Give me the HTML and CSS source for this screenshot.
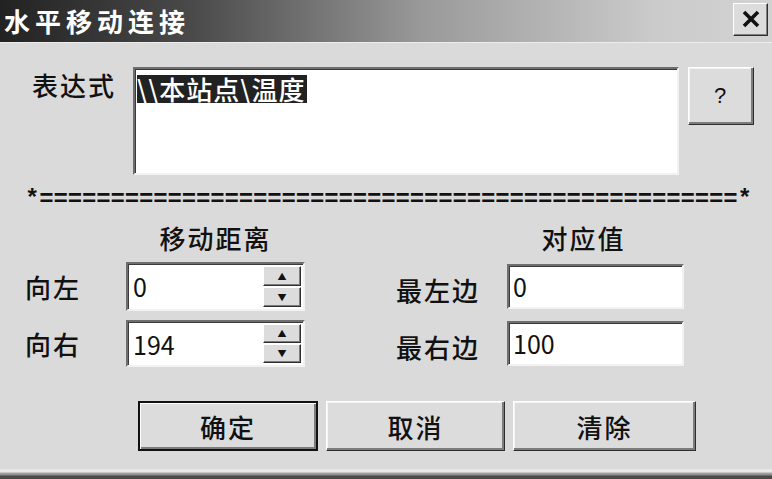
FILE: index.html
```html
<!DOCTYPE html>
<html lang="zh-CN">
<head>
    <meta charset="UTF-8">
    <title>水平移动连接</title>
    <link rel="stylesheet" href="styles.css">
</head>
<body>
    <div class="dialog">
        <div class="titlebar">
            <span class="title">水平移动连接</span>
            <div class="close-btn">
                <svg width="20" height="18" viewBox="0 0 20 18">
                    <path d="M3 2 L17 16 M17 2 L3 16" stroke="#111" stroke-width="3.6" fill="none"/>
                </svg>
            </div>
        </div>

        <div class="content">
            <div class="expr-row">
                <span class="expr-label">表达式</span>
                <div class="expr-box"><span class="selected">\\本站点\温度</span></div>
                <div class="btn help-btn">?</div>
            </div>

            <div class="separator">*=================================================*</div>

            <div class="fields">
                <div class="col-head head-move">移动距离</div>
                <div class="col-head head-value">对应值</div>

                <span class="field-label row-1">向左</span>
                <div class="spin row-1">
                    <div class="spin-text">0</div>
                    <div class="spin-btns">
                        <div class="spin-btn">&#9650;</div>
                        <div class="spin-btn">&#9660;</div>
                    </div>
                </div>
                <span class="field-label right-label row-1">最左边</span>
                <div class="edit row-1">0</div>

                <span class="field-label row-2">向右</span>
                <div class="spin row-2">
                    <div class="spin-text">194</div>
                    <div class="spin-btns">
                        <div class="spin-btn">&#9650;</div>
                        <div class="spin-btn">&#9660;</div>
                    </div>
                </div>
                <span class="field-label right-label row-2">最右边</span>
                <div class="edit row-2">100</div>
            </div>

            <div class="actions">
                <div class="btn default-btn"><span>确定</span></div>
                <div class="btn cancel-btn">取消</div>
                <div class="btn clear-btn">清除</div>
            </div>
        </div>
        <div class="frame-bottom"></div>
    </div>
</body>
</html>
```

FILE: styles.css
```css
body {
    margin: 0;
    background: #dadada;
    font-family: "Noto Sans CJK SC", "Noto Sans", sans-serif;
    font-weight: 500;
    color: #111;
}
.dialog {
    width: 772px;
    height: 479px;
    background: #dadada;
    display: flex;
    flex-direction: column;
    overflow: hidden;
}
.titlebar {
    height: 42px;
    flex: 0 0 42px;
    background: linear-gradient(to right, #222, #4a4a4a 25%, #9a9a9a 55%, #cbcbcb 85%, #d2d2d2);
    border-bottom: 1px solid #ededed;
    display: flex;
    align-items: center;
    justify-content: space-between;
}
.title {
    color: #fff;
    font-size: 26px;
    font-weight: bold;
    letter-spacing: 5px;
    line-height: 30px;
    padding-left: 4px;
}
.close-btn {
    width: 35px;
    height: 33px;
    margin-right: 4px;
    margin-top: -4px;
    background: #dcdcdc;
    box-sizing: border-box;
    border: 1px solid;
    border-color: #fff #303030 #303030 #fff;
    box-shadow: inset -1px -1px 0 #808080;
    display: flex;
    align-items: center;
    justify-content: center;
}
.content {
    flex: 1;
    padding-left: 25px;
}
.expr-row {
    display: flex;
    align-items: flex-start;
    margin-top: 24px;
}
.expr-label {
    flex: 0 0 101px;
    margin-left: 7px;
    margin-top: 3px;
    font-size: 26px;
    line-height: 30px;
    letter-spacing: 2px;
}
.expr-box {
    width: 546px;
    height: 108px;
    box-sizing: border-box;
    background: #fff;
    border: 2px solid;
    border-color: #6e6e6e #f2f2f2 #f2f2f2 #6e6e6e;
    box-shadow: inset 1px 1px 0 #3a3a3a;
    padding: 6px 0 0 2px;
}
.selected {
    display: inline-block;
    background: #222;
    color: #fff;
    font-size: 26px;
    line-height: 28px;
    letter-spacing: 1px;
    padding-right: 2px;
}
.btn {
    box-sizing: border-box;
    background: #dcdcdc;
    border: 1px solid;
    border-color: #fff #2e2e2e #2e2e2e #fff;
    box-shadow: inset -2px -2px 0 #7c7c7c, inset 1px 1px 0 #f4f4f4;
    display: flex;
    align-items: center;
    justify-content: center;
    font-size: 26px;
    letter-spacing: 2px;
}
.help-btn {
    width: 66px;
    height: 58px;
    margin-left: 9px;
    font-family: "Liberation Sans", sans-serif;
    font-size: 22px;
}
.separator {
    margin-top: 14px;
    height: 22px;
    line-height: 22px;
    font-family: "Liberation Mono", monospace;
    font-weight: bold;
    font-size: 24px;
    letter-spacing: -0.15px;
    white-space: nowrap;
}
.fields {
    display: grid;
    grid-template-columns: 101px 179px 91px 111px 177px;
    grid-template-rows: 30px 49px 47px;
    row-gap: 9px;
    margin-top: 12px;
}
.row-1 {
    grid-row: 2;
}
.row-2 {
    grid-row: 3;
}
.col-head {
    font-size: 26px;
    line-height: 30px;
    letter-spacing: 2px;
    text-align: center;
}
.head-move {
    grid-column: 2;
    grid-row: 1;
}
.head-value {
    grid-column: 5;
    grid-row: 1;
    padding-right: 24px;
}
.field-label {
    grid-column: 1;
    font-size: 26px;
    line-height: 30px;
    letter-spacing: 2px;
    align-self: center;
}
.right-label {
    grid-column: 4;
    margin-top: 6px;
}
.spin {
    grid-column: 2;
    display: flex;
    box-sizing: border-box;
    background: #fff;
    border: 2px solid;
    border-color: #6e6e6e #f2f2f2 #f2f2f2 #6e6e6e;
    box-shadow: inset 1px 1px 0 #3a3a3a;
    padding: 2px 2px 2px 3px;
}
.spin-text {
    flex: 1;
    font-size: 25px;
    font-weight: normal;
    line-height: 40px;
    padding-left: 2px;
}
.spin-btns {
    width: 38px;
    display: flex;
    flex-direction: column;
    gap: 1px;
}
.spin-btn {
    flex: 1;
    box-sizing: border-box;
    background: #dcdcdc;
    border: 1px solid;
    border-color: #fff #2e2e2e #2e2e2e #fff;
    box-shadow: inset -1px -1px 0 #7c7c7c;
    font-size: 9px;
    display: flex;
    align-items: center;
    justify-content: center;
}
.edit {
    grid-column: 5;
    height: 45px;
    align-self: center;
    box-sizing: border-box;
    background: #fff;
    border: 2px solid;
    border-color: #6e6e6e #f2f2f2 #f2f2f2 #6e6e6e;
    box-shadow: inset 1px 1px 0 #3a3a3a;
    padding-left: 4px;
    font-size: 25px;
    font-weight: normal;
    line-height: 40px;
}
.actions {
    display: flex;
    margin-top: 34px;
    margin-left: 113px;
    gap: 8px;
}
.actions .btn {
    height: 50px;
}
.default-btn {
    width: 180px;
    border: 2px solid #111;
    box-shadow: inset 1px 1px 0 #fff, inset -2px -2px 0 #7c7c7c;
}
.cancel-btn {
    width: 179px;
}
.clear-btn {
    width: 183px;
}
.frame-bottom {
    height: 10px;
    flex: 0 0 10px;
    background: linear-gradient(to bottom, #e8e8e8 0, #e8e8e8 3px, #a8a8a8 4px, #8a8a8a 6px, #4a4a4a 7px, #4a4a4a 10px);
}
```
